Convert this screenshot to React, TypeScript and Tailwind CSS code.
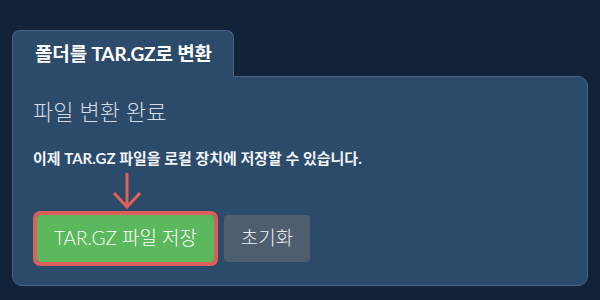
export default function App() {
  return (
    <div className="h-[300px] w-[600px] overflow-hidden bg-[#112339] px-[12px] pt-[30px] font-['Lato','Noto_Sans_CJK_KR',sans-serif]">
      <div className="relative z-10 -mb-px inline-flex h-[47px] items-center rounded-t-[8px] border border-b-0 border-[#4b6486] bg-[#2c4a6a] pl-[22px] pr-[21px]">
        <span className="text-[19px] font-bold tracking-[-0.15px] text-white">폴더를 TAR.GZ로 변환</span>
      </div>
      <div className="h-[210px] w-[576px] rounded-b-[10px] rounded-tr-[10px] border border-[#4b6486] bg-[#2c4a6a] px-[20px] pt-[20px]">
        <h2 className="text-[22px] font-light leading-[30px] text-[#d3dbe5]">파일 변환 완료</h2>
        <p className="mt-[20px] text-[15px] font-bold leading-[22px] text-[#f1f4f8]">
          이제 TAR.GZ 파일을 로컬 장치에 저장할 수 있습니다.
        </p>
        <div className="relative ml-[4px] mt-[46px] flex gap-[10px]">
          <svg
            className="absolute left-[75px] top-[-43px]"
            width="30"
            height="38"
            viewBox="0 0 30 38"
            fill="none"
            stroke="#e0605a"
            strokeWidth="3"
          >
            <path d="M15 1 L15 35" />
            <path d="M2 21 L15 35 L28 21" />
          </svg>
          <button className="h-[47px] w-[177px] rounded-[3px] bg-[#5cb85c] text-[19px] font-light text-white outline-[4px] outline-solid outline-[#dc5f5a]">
            TAR.GZ 파일 저장
          </button>
          <button className="h-[47px] w-[86px] rounded-[4px] bg-[#4f5e6e] text-[19px] font-light text-[#e9edf2]">
            초기화
          </button>
        </div>
      </div>
    </div>
  );
}
